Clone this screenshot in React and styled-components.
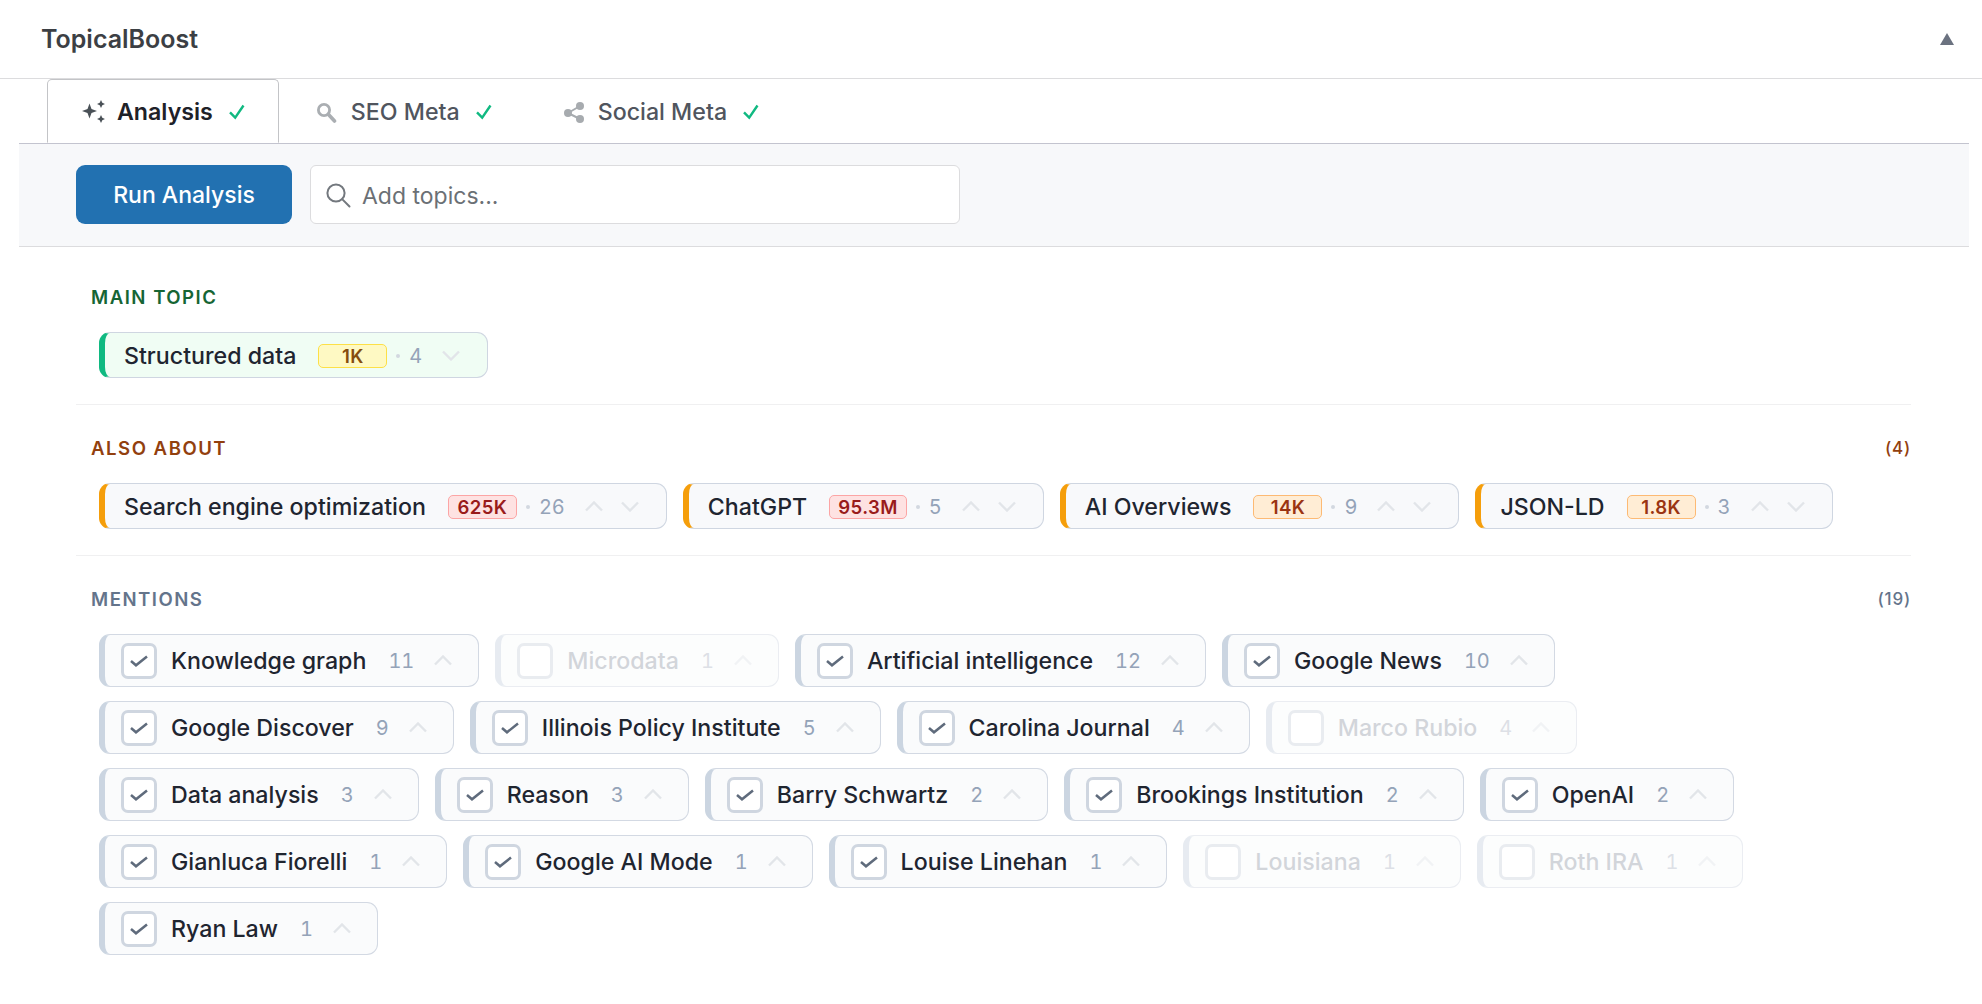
import React from 'react';
import styled, { createGlobalStyle } from 'styled-components';

const GlobalStyle = createGlobalStyle`
  * { box-sizing: border-box; }
  body {
    margin: 0;
    background: #fff;
    font-family: Inter, "Noto Sans", sans-serif;
    color: #1d2327;
  }
`;

const Header = styled.header`
  height: 79px;
  display: flex;
  align-items: center;
  justify-content: space-between;
  padding: 0 28px 0 41px;
  border-bottom: 1px solid #dcdcde;
`;

const Title = styled.h2`
  margin: 0;
  font-size: 25px;
  font-weight: 600;
  color: #3c3f44;
`;

const TabBar = styled.nav`
  display: flex;
  height: 64px;
  padding-left: 47px;
  position: relative;
  z-index: 1;
`;

const Tab = styled.div`
  display: flex;
  align-items: center;
  height: 64px;
  padding: ${p => (p.$active ? '2px 33px 0 34px' : '2px 36px 0 35px')};
  font-size: 23.2px;
  font-weight: ${p => (p.$active ? 600 : 500)};
  color: ${p => (p.$active ? '#1e2128' : '#50555e')};
  background: ${p => (p.$active ? '#fff' : 'transparent')};
  border: 1px solid ${p => (p.$active ? '#c3c4c7' : 'transparent')};
  border-bottom-color: ${p => (p.$active ? '#fff' : 'transparent')};
  border-radius: 5px 5px 0 0;
  margin-right: ${p => (p.$active ? '1px' : '-1px')};
`;

const TabLabel = styled.span`
  margin: 0 16px 0 ${p => (p.$active ? '11px' : '14px')};
`;

const Panel = styled.main`
  margin: 0 13px 0 19px;
`;

const Toolbar = styled.div`
  display: flex;
  gap: 18px;
  height: 104px;
  padding: 21px 0 0 57px;
  background: #f7f8fa;
  border-top: 1px solid #c3c4cf;
  border-bottom: 1px solid #dcdcde;
`;

const RunButton = styled.button`
  width: 216px;
  height: 59px;
  border: 0;
  border-radius: 9px;
  background: #2271b1;
  color: #fff;
  font-family: inherit;
  font-size: 23px;
  font-weight: 500;
`;

const SearchBox = styled.label`
  display: flex;
  align-items: center;
  gap: 11px;
  width: 650px;
  height: 59px;
  padding: 0 14px;
  background: #fff;
  border: 1px solid #dcdcde;
  border-radius: 6px;
`;

const SearchInput = styled.input`
  flex: 1;
  padding: 2px 0 0;
  border: 0;
  outline: 0;
  background: transparent;
  font-family: inherit;
  font-size: 23px;
  color: #1d2327;
  &::placeholder { color: #6b7075; opacity: 1; }
`;

const Section = styled.section`
  margin: 0 58px 0 57px;
  padding: ${p => p.$top}px 0 ${p => p.$bottom}px;
  border-bottom: ${p => (p.$last ? '0' : '1px solid #f0f0f1')};
`;

const SectionHead = styled.div`
  display: flex;
  justify-content: space-between;
  align-items: center;
  height: 24px;
  margin-bottom: 24px;
  padding: 2px 0 0 15px;
  color: ${p => p.$color};
`;

const SectionName = styled.h3`
  margin: 0;
  font-size: 18.6px;
  font-weight: 600;
  letter-spacing: 1.5px;
  text-transform: uppercase;
`;

const SectionCount = styled.span`
  font-size: 17px;
  font-weight: 500;
  letter-spacing: 0.8px;
`;

const ChipList = styled.div`
  display: flex;
  flex-wrap: wrap;
  gap: 14px 16px;
  padding-left: 23px;
`;

const Chip = styled.div`
  display: flex;
  align-items: center;
  height: 46px;
  padding: 1px 27px 0 19px;
  font-size: 23.2px;
  font-weight: 500;
  background: ${p => p.$bg};
  border: 1px solid #cfd6e1;
  border-left: 6px solid ${p => p.$accent};
  border-radius: 11px;
`;

const ChipName = styled.span`
  margin-right: 22px;
  color: #1f2530;
  white-space: nowrap;
`;

const Volume = styled.span`
  min-width: 69px;
  height: 24px;
  padding: 0 8px;
  display: flex;
  align-items: center;
  justify-content: center;
  font-size: 18.6px;
  font-weight: 600;
  letter-spacing: 0.4px;
  border-radius: 5px;
  color: ${p => p.$tone.text};
  background: ${p => p.$tone.bg};
  border: 1px solid ${p => p.$tone.line};
`;

const Dot = styled.span`
  width: 4px;
  height: 4px;
  margin: 0 9px;
  border-radius: 50%;
  background: #d3d8e0;
`;

const Count = styled.span`
  margin-right: 20px;
  font-size: 20px;
  font-weight: 400;
  font-variant-numeric: tabular-nums;
  color: ${p => (p.$off ? '#b4bcc8' : '#94a3b8')};
`;

const ChevronSvg = styled.svg`
  display: block;
  flex: none;
  width: 18px;
  height: 11px;
  fill: none;
  stroke: #e2e5e9;
  stroke-width: 2.4;
  & + & { margin-left: 18px; }
`;

const Mention = styled.div`
  display: flex;
  align-items: center;
  height: 53px;
  padding: 0 26px 0 16px;
  font-size: 23.2px;
  font-weight: 500;
  background: #fafbfc;
  border: 1px solid #d3d9e3;
  border-left: 6px solid #cbd5e1;
  border-radius: 11px;
  opacity: ${p => (p.$off ? 0.45 : 1)};
`;

const Box = styled.span`
  flex: none;
  display: flex;
  align-items: center;
  justify-content: center;
  width: 36px;
  height: 36px;
  margin-right: 14px;
  background: #fff;
  border: 3px solid #cfd6e0;
  border-radius: 7px;
`;

const MentionName = styled.span`
  margin-right: 22px;
  color: ${p => (p.$off ? '#9ca3af' : '#1f2530')};
  white-space: nowrap;
`;

const Chevron = ({ down }) => (
  <ChevronSvg viewBox="0 0 18 11">
    <polyline points={down ? '1,1.5 9,9.5 17,1.5' : '1,9.5 9,1.5 17,9.5'} />
  </ChevronSvg>
);

const GreenCheck = () => (
  <svg width="16" height="16" viewBox="0 0 16 16" fill="none" stroke="#10b981" strokeWidth="2.4">
    <polyline points="1,8.3 6.2,13.6 14.5,1.5" />
  </svg>
);

const Sparkles = () => (
  <svg width="24" height="24" viewBox="0 0 24 24" fill="#4a5157">
    <path d="M7.5 3.5 9.5 9 15 11 9.5 13 7.5 18.5 5.5 13 0 11 5.5 9Z" />
    <path d="M19 0 20.3 2.7 23 4 20.3 5.3 19 8 17.7 5.3 15 4 17.7 2.7Z" />
    <path d="M19 15 20.3 17.7 23 19 20.3 20.3 19 23 17.7 20.3 15 19 17.7 17.7Z" />
  </svg>
);

const SearchSolid = () => (
  <svg width="21" height="21" viewBox="0 0 21 21" fill="none" stroke="#aaaeb2">
    <circle cx="8" cy="8" r="5.6" strokeWidth="2.8" />
    <line x1="12.5" y1="12.5" x2="18.5" y2="19" strokeWidth="3.6" strokeLinecap="round" />
  </svg>
);

const Share = () => (
  <svg width="20" height="21" viewBox="0 0 20 21" fill="#a7abaf" stroke="#a7abaf">
    <line x1="4" y1="11" x2="16" y2="4" strokeWidth="2" />
    <line x1="4" y1="11" x2="16" y2="17" strokeWidth="2" />
    <circle cx="4" cy="11" r="4" stroke="none" />
    <circle cx="16" cy="4" r="4" stroke="none" />
    <circle cx="16" cy="17" r="4" stroke="none" />
  </svg>
);

const Magnifier = () => (
  <svg width="26" height="26" viewBox="0 0 26 26" fill="none" stroke="#73787e" strokeWidth="2">
    <circle cx="11" cy="11" r="8.6" />
    <line x1="17.4" y1="17.4" x2="24.5" y2="24.5" strokeLinecap="round" />
  </svg>
);

const Tick = () => (
  <svg width="18" height="12" viewBox="0 0 18 12" fill="none" stroke="#5f6b7c" strokeWidth="2.5">
    <polyline points="1,6 6,10.3 17,1.5" />
  </svg>
);

const tones = {
  yellow: { bg: '#fef9c3', line: '#fde047', text: '#854d0e' },
  red: { bg: '#fee2e2', line: '#fca5a5', text: '#991b1b' },
  orange: { bg: '#ffedd5', line: '#fdba74', text: '#9a3412' }
};

const alsoAbout = [
  { name: 'Search engine optimization', volume: '625K', tone: 'red', count: 26 },
  { name: 'ChatGPT', volume: '95.3M', tone: 'red', count: 5 },
  { name: 'AI Overviews', volume: '14K', tone: 'orange', count: 9 },
  { name: 'JSON-LD', volume: '1.8K', tone: 'orange', count: 3 }
];

const mentions = [
  { name: 'Knowledge graph', count: 11 },
  { name: 'Microdata', count: 1, off: true },
  { name: 'Artificial intelligence', count: 12 },
  { name: 'Google News', count: 10 },
  { name: 'Google Discover', count: 9 },
  { name: 'Illinois Policy Institute', count: 5 },
  { name: 'Carolina Journal', count: 4 },
  { name: 'Marco Rubio', count: 4, off: true },
  { name: 'Data analysis', count: 3 },
  { name: 'Reason', count: 3 },
  { name: 'Barry Schwartz', count: 2 },
  { name: 'Brookings Institution', count: 2 },
  { name: 'OpenAI', count: 2 },
  { name: 'Gianluca Fiorelli', count: 1 },
  { name: 'Google AI Mode', count: 1 },
  { name: 'Louise Linehan', count: 1 },
  { name: 'Louisiana', count: 1, off: true },
  { name: 'Roth IRA', count: 1, off: true },
  { name: 'Ryan Law', count: 1 }
];

const App = () => (
  <>
    <GlobalStyle />
    <Header>
      <Title>TopicalBoost</Title>
      <svg width="14" height="12" viewBox="0 0 14 12" fill="#6b7280">
        <polygon points="7,0 14,12 0,12" />
      </svg>
    </Header>
    <TabBar>
      <Tab $active>
        <Sparkles />
        <TabLabel $active>Analysis</TabLabel>
        <GreenCheck />
      </Tab>
      <Tab>
        <SearchSolid />
        <TabLabel>SEO Meta</TabLabel>
        <GreenCheck />
      </Tab>
      <Tab>
        <Share />
        <TabLabel>Social Meta</TabLabel>
        <GreenCheck />
      </Tab>
    </TabBar>
    <Panel>
      <Toolbar>
        <RunButton>Run Analysis</RunButton>
        <SearchBox>
          <Magnifier />
          <SearchInput placeholder="Add topics..." />
        </SearchBox>
      </Toolbar>
      <Section $top={37} $bottom={26}>
        <SectionHead $color="#166534">
          <SectionName>Main Topic</SectionName>
        </SectionHead>
        <ChipList>
          <Chip $bg="#f0fdf4" $accent="#10b981">
            <ChipName>Structured data</ChipName>
            <Volume $tone={tones.yellow}>1K</Volume>
            <Dot />
            <Count>4</Count>
            <Chevron down />
          </Chip>
        </ChipList>
      </Section>
      <Section $top={30} $bottom={26}>
        <SectionHead $color="#92400e">
          <SectionName>Also About</SectionName>
          <SectionCount>(4)</SectionCount>
        </SectionHead>
        <ChipList>
          {alsoAbout.map(item => (
            <Chip key={item.name} $bg="#f8f9fb" $accent="#f59e0b">
              <ChipName>{item.name}</ChipName>
              <Volume $tone={tones[item.tone]}>{item.volume}</Volume>
              <Dot />
              <Count>{item.count}</Count>
              <Chevron />
              <Chevron down />
            </Chip>
          ))}
        </ChipList>
      </Section>
      <Section $top={30} $bottom={0} $last>
        <SectionHead $color="#64748b">
          <SectionName>Mentions</SectionName>
          <SectionCount>(19)</SectionCount>
        </SectionHead>
        <ChipList>
          {mentions.map(item => (
            <Mention key={item.name} $off={item.off}>
              <Box>{!item.off && <Tick />}</Box>
              <MentionName $off={item.off}>{item.name}</MentionName>
              <Count $off={item.off}>{item.count}</Count>
              <Chevron />
            </Mention>
          ))}
        </ChipList>
      </Section>
    </Panel>
  </>
);

export default App;
